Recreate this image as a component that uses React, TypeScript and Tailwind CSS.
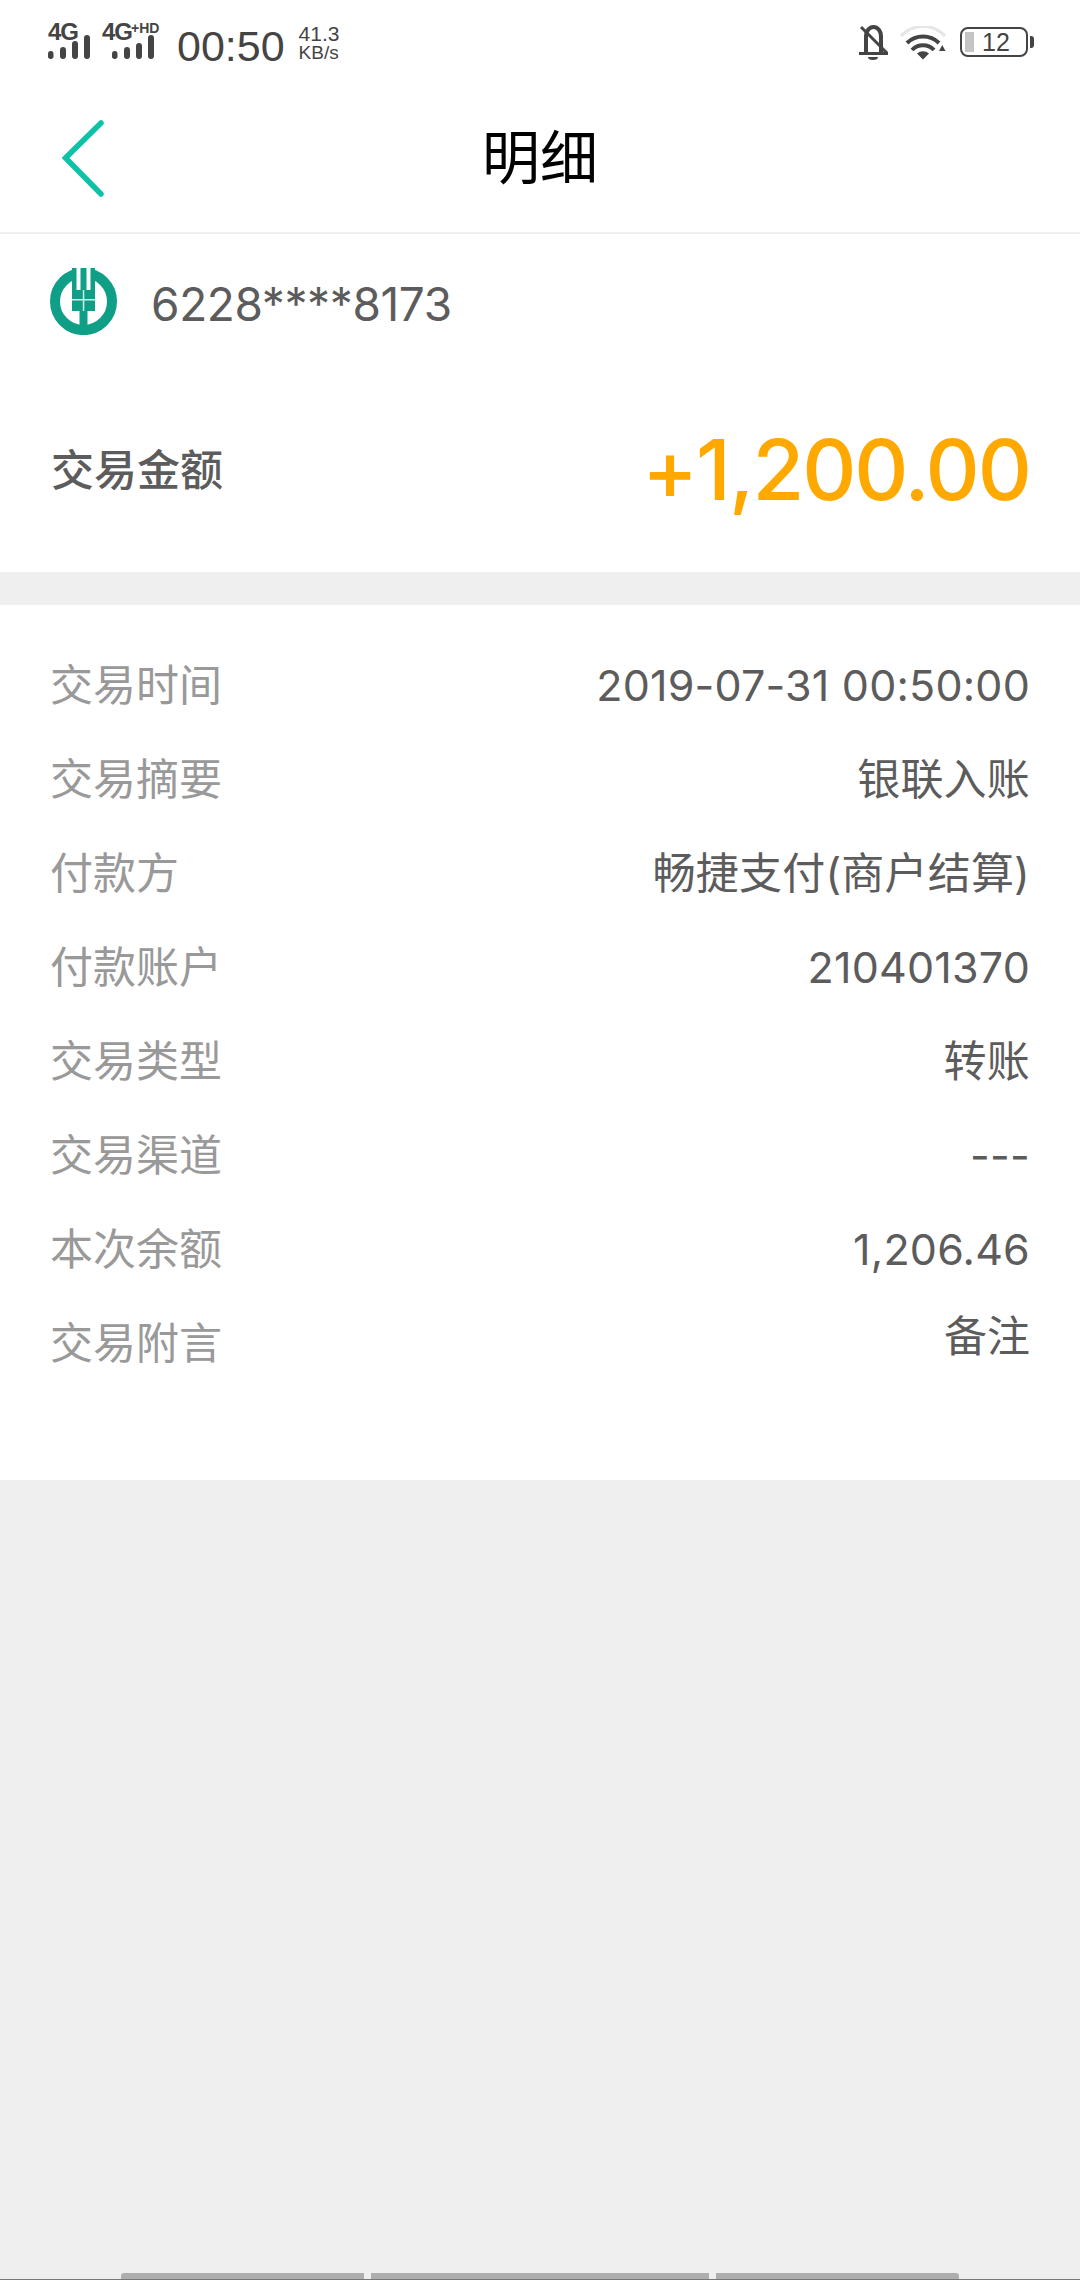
const rows = [
  ["交易时间", "2019-07-31 00:50:00"],
  ["交易摘要", "银联入账"],
  ["付款方", "畅捷支付(商户结算)"],
  ["付款账户", "210401370"],
  ["交易类型", "转账"],
  ["交易渠道", "---"],
  ["本次余额", "1,206.46"],
];

const SignalBars = ({ className, third }: { className: string; third: number }) => (
  <svg width="42" height="25" viewBox="0 0 42 25" className={className} fill="#444">
    <rect x="0" y="16" width="5.500" height="8" rx="2.700" />
    <rect x="12" y="12" width="6" height="12" rx="3" />
    <rect x="24" y={24 - third} width="6" height={third} rx="3" />
    <rect x="36" y="0" width="6" height="24" rx="3" />
  </svg>
);

const BellOff = () => (
  <svg width="29" height="35" viewBox="0 0 29 35" fill="none" stroke="#444">
    <path d="M7 28V11a7.500 9 0 0 1 15 0v17" strokeWidth="4" />
    <path d="M0 28.500h29" strokeWidth="3" />
    <path d="M2 2l26 26" strokeWidth="3" />
    <path d="M9 32h10a5 3 0 0 1-10 0z" fill="#444" stroke="none" />
  </svg>
);

const Wifi = () => (
  <svg width="46" height="34" viewBox="0 0 46 34" fill="none" strokeWidth="4">
    <path d="M1 10a30 30 0 0 1 44 0" stroke="#e6e6e6" strokeWidth="3" />
    <path d="M7 17a23 23 0 0 1 32 0" stroke="#444" />
    <path d="M12 24a15 15 0 0 1 22 0" stroke="#444" />
    <path d="M17 27.500a9 9 0 0 1 12 0l-6 6z" fill="#444" stroke="none" />
    <path d="M39 25h6.500l-3.200-6z" fill="#444" stroke="none" />
  </svg>
);

const BankLogo = () => (
  <svg width="67" height="67" viewBox="0 0 67 67">
    <circle cx="33.500" cy="33.500" r="28.500" fill="none" stroke="#0f9f87" strokeWidth="10" />
    <rect x="22" y="0" width="23" height="43" fill="#0f9f87" />
    <rect x="26.500" y="0" width="4" height="22" fill="#fff" />
    <rect x="36.500" y="0" width="4" height="22" fill="#fff" />
    <rect x="29.500" y="43" width="8" height="24" fill="#0f9f87" />
    <rect x="22" y="31" width="23" height="1.500" fill="#d5efe9" />
    <rect x="32.800" y="22" width="1.500" height="21" fill="#d5efe9" />
  </svg>
);

export default function App() {
  return (
    <div className="relative h-[2280px] w-[1080px] overflow-hidden bg-[#efefef] font-['Inter','Noto_Sans_CJK_SC',sans-serif]">
      <div className="bg-white">
        {/* status bar */}
        <div className="relative flex h-[80px] items-start pl-[48px] pr-[52px] font-['Liberation_Sans','Noto_Sans_CJK_SC',sans-serif] text-[#444]">
          <div className="relative h-[60px] w-[42px]">
            <span className="absolute left-0 top-[20px] text-[24px] font-bold leading-[24px] tracking-[-1px]">4G</span>
            <SignalBars className="absolute left-0 top-[35px]" third={18} />
          </div>
          <div className="relative ml-[12px] h-[60px] w-[62px]">
            <span className="absolute left-0 top-[20px] text-[24px] font-bold leading-[24px] tracking-[-1px]">4G</span>
            <span className="absolute left-[29px] top-[21px] text-[14px] font-bold leading-[14px]">+HD</span>
            <SignalBars className="absolute left-[10px] top-[35px]" third={16} />
          </div>
          <span className="ml-[13px] mt-[26px] text-[43px] leading-[40px]">00:50</span>
          <div className="ml-[14px] mt-[24px] flex flex-col items-start text-[21px] leading-[20px]">
            <span>41.3</span>
            <span className="text-[19px] leading-[18px]">KB/s</span>
          </div>
          <div className="ml-auto mt-[25px] flex items-start">
            <BellOff />
            <div className="ml-[12px] mt-[1px]">
              <Wifi />
            </div>
            <div className="relative ml-[14px] mt-[2px] flex h-[30px] w-[68px] items-center rounded-[8px] border-[2.500px] border-[#444] pl-[3px]">
              <div className="h-[20px] w-[9px] bg-[#c4c4c4]" />
              <span className="ml-[8px] text-[25px] leading-none">12</span>
              <div className="absolute right-[-7.500px] h-[12px] w-[4px] rounded-r-[3px] bg-[#444]" />
            </div>
          </div>
        </div>

        {/* title bar */}
        <div className="relative flex h-[154px] items-center justify-center border-b-[2px] border-[#eeeeee]">
          <svg width="44" height="78" viewBox="0 0 44 78" className="absolute left-[62px] top-[39px]" fill="none" stroke="#0cc3a8" strokeWidth="5.500" strokeLinecap="round">
            <path d="M39 4L3.500 39 39 75" />
          </svg>
          <span className="mt-[3px] text-[58px] leading-none text-black">明细</span>
        </div>

        {/* card */}
        <div className="flex items-center pl-[50px] pt-[34px]">
          <BankLogo />
          <span className="ml-[34px] mt-[5px] text-[46px] leading-[62px] tracking-[-0.4px] text-[#5c5c5c]">6228****8173</span>
        </div>
        <div className="flex items-center justify-between pb-[51px] pl-[51px] pr-[50px] pt-[84px]">
          <span className="text-[43px] font-medium text-[#5c5c5c]">交易金额</span>
          <span className="text-[84px] font-medium leading-[102px] tracking-[-2px] text-[#ffa800]">+1,200.00</span>
        </div>
      </div>

      {/* detail list */}
      <div className="mt-[33px] bg-white px-[50px] pb-[90px] pt-[33px]">
        {rows.map(([label, value]) => (
          <div key={label} className="flex h-[94px] items-center justify-between">
            <span className="text-[43px] text-[#999]">{label}</span>
            <span className="text-[43px] tracking-[0.2px] text-[#5c5c5c]">{value}</span>
          </div>
        ))}
        <div className="flex h-[94px] items-start justify-between">
          <span className="mt-[12px] text-[43px] leading-[70px] text-[#999]">交易附言</span>
          <span className="mt-[5px] text-[43px] leading-[70px] text-[#5c5c5c]">备注</span>
        </div>
      </div>

      {/* bottom bars */}
      <div className="absolute bottom-[1px] left-[121px] flex h-[6px] gap-[7px]">
        <div className="w-[243px] rounded-tl-[3px] bg-[#aeaeae]" />
        <div className="w-[338px] bg-[#aeaeae]" />
        <div className="w-[243px] rounded-tr-[3px] bg-[#aeaeae]" />
      </div>
      <div className="absolute bottom-0 left-0 h-[1px] w-full bg-[#777]" />
    </div>
  );
}
